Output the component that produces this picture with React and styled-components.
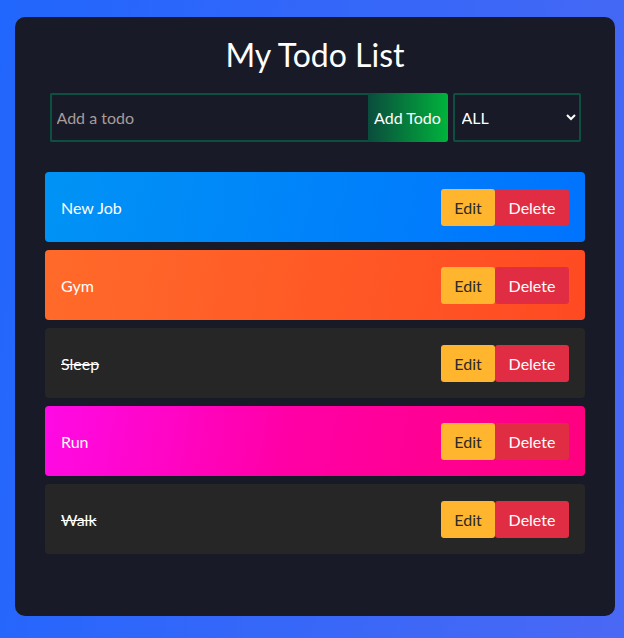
import React, { useState } from 'react';
import styled, { createGlobalStyle } from 'styled-components';

const GlobalStyle = createGlobalStyle`
  html, body {
    margin: 0;
    padding: 0;
    height: 100%;
  }
  body {
    background: linear-gradient(100deg, #2166fd 0%, #4a68f4 100%);
    font-family: Lato, 'Noto Sans', sans-serif;
    color: #fff;
  }
  * {
    box-sizing: border-box;
  }
`;

const Page = styled.div`
  padding: 17px 9px 22px 15px;
`;

const Card = styled.div`
  width: 600px;
  background: #181b27;
  border-radius: 10px;
  padding: 19px 30px 62px;
`;

const Title = styled.h1`
  margin: 0;
  text-align: center;
  font-size: 32px;
  font-weight: 400;
  line-height: 37px;
`;

const Form = styled.form`
  display: flex;
  gap: 5px;
  width: 531px;
  margin: 20px auto 30px;
`;

const InputGroup = styled.div`
  display: flex;
  flex: 1;
  height: 49px;
`;

const TodoInput = styled.input`
  flex: 1;
  min-width: 0;
  background: transparent;
  border: 2px solid #0e5040;
  border-right: none;
  border-radius: 2px 0 0 2px;
  color: #fff;
  font: inherit;
  font-size: 16px;
  padding: 0 5px;
  outline: none;
  caret-color: #fff;
  &::placeholder {
    color: #a89b9b;
  }
`;

const AddButton = styled.button`
  width: 80px;
  border: none;
  border-radius: 0 3px 3px 0;
  background: linear-gradient(90deg, #0a4c3c 0%, #00b33c 100%);
  color: #fff;
  font: inherit;
  font-size: 16px;
  padding: 0;
  cursor: pointer;
`;

const FilterSelect = styled.select`
  width: 128px;
  height: 49px;
  background: #181b27;
  border: 2px solid #0e5040;
  border-radius: 2px;
  color: #fff;
  font: inherit;
  font-size: 16px;
  padding: 0 3px;
  outline: none;
`;

const List = styled.ul`
  list-style: none;
  margin: 0;
  padding: 0;
  display: flex;
  flex-direction: column;
  gap: 8px;
`;

const Item = styled.li`
  display: flex;
  align-items: center;
  justify-content: space-between;
  height: 70px;
  padding: 0 16px;
  border-radius: 4px;
  background: ${(p) => p.$bg};
`;

const ItemText = styled.span`
  font-size: 16px;
  color: #fff;
  text-decoration: ${(p) => (p.$done ? 'line-through' : 'none')};
`;

const Actions = styled.div`
  display: flex;
`;

const ActionButton = styled.button`
  height: 37px;
  width: ${(p) => (p.$danger ? '74px' : '54px')};
  border: none;
  border-radius: 3px;
  background: ${(p) => (p.$danger ? '#e02d44' : '#ffb52e')};
  color: ${(p) => (p.$danger ? '#fff' : '#2a2a2a')};
  font: inherit;
  font-size: 16px;
  padding: 0;
  cursor: pointer;
`;

const todos = [
  { text: 'New Job', done: false, bg: 'linear-gradient(100deg, #0093f5 0%, #0073ff 100%)' },
  { text: 'Gym', done: false, bg: 'linear-gradient(100deg, #ff6a2a 0%, #ff4a22 100%)' },
  { text: 'Sleep', done: true, bg: '#262626' },
  { text: 'Run', done: false, bg: 'linear-gradient(100deg, #ff0ae6 0%, #ff00a6 45%, #ff0080 100%)' },
  { text: 'Walk', done: true, bg: '#262626' },
];

export default function App() {
  const [value, setValue] = useState('');
  return (
    <>
      <GlobalStyle />
      <Page>
        <Card>
          <Title>My Todo List</Title>
          <Form onSubmit={(e) => e.preventDefault()}>
            <InputGroup>
              <TodoInput
                autoFocus
                placeholder="Add a todo"
                value={value}
                onChange={(e) => setValue(e.target.value)}
              />
              <AddButton type="submit">Add Todo</AddButton>
            </InputGroup>
            <FilterSelect defaultValue="all">
              <option value="all">ALL</option>
              <option value="completed">COMPLETED</option>
              <option value="pending">PENDING</option>
            </FilterSelect>
          </Form>
          <List>
            {todos.map((t) => (
              <Item key={t.text} $bg={t.bg}>
                <ItemText $done={t.done}>{t.text}</ItemText>
                <Actions>
                  <ActionButton>Edit</ActionButton>
                  <ActionButton $danger>Delete</ActionButton>
                </Actions>
              </Item>
            ))}
          </List>
        </Card>
      </Page>
    </>
  );
}
